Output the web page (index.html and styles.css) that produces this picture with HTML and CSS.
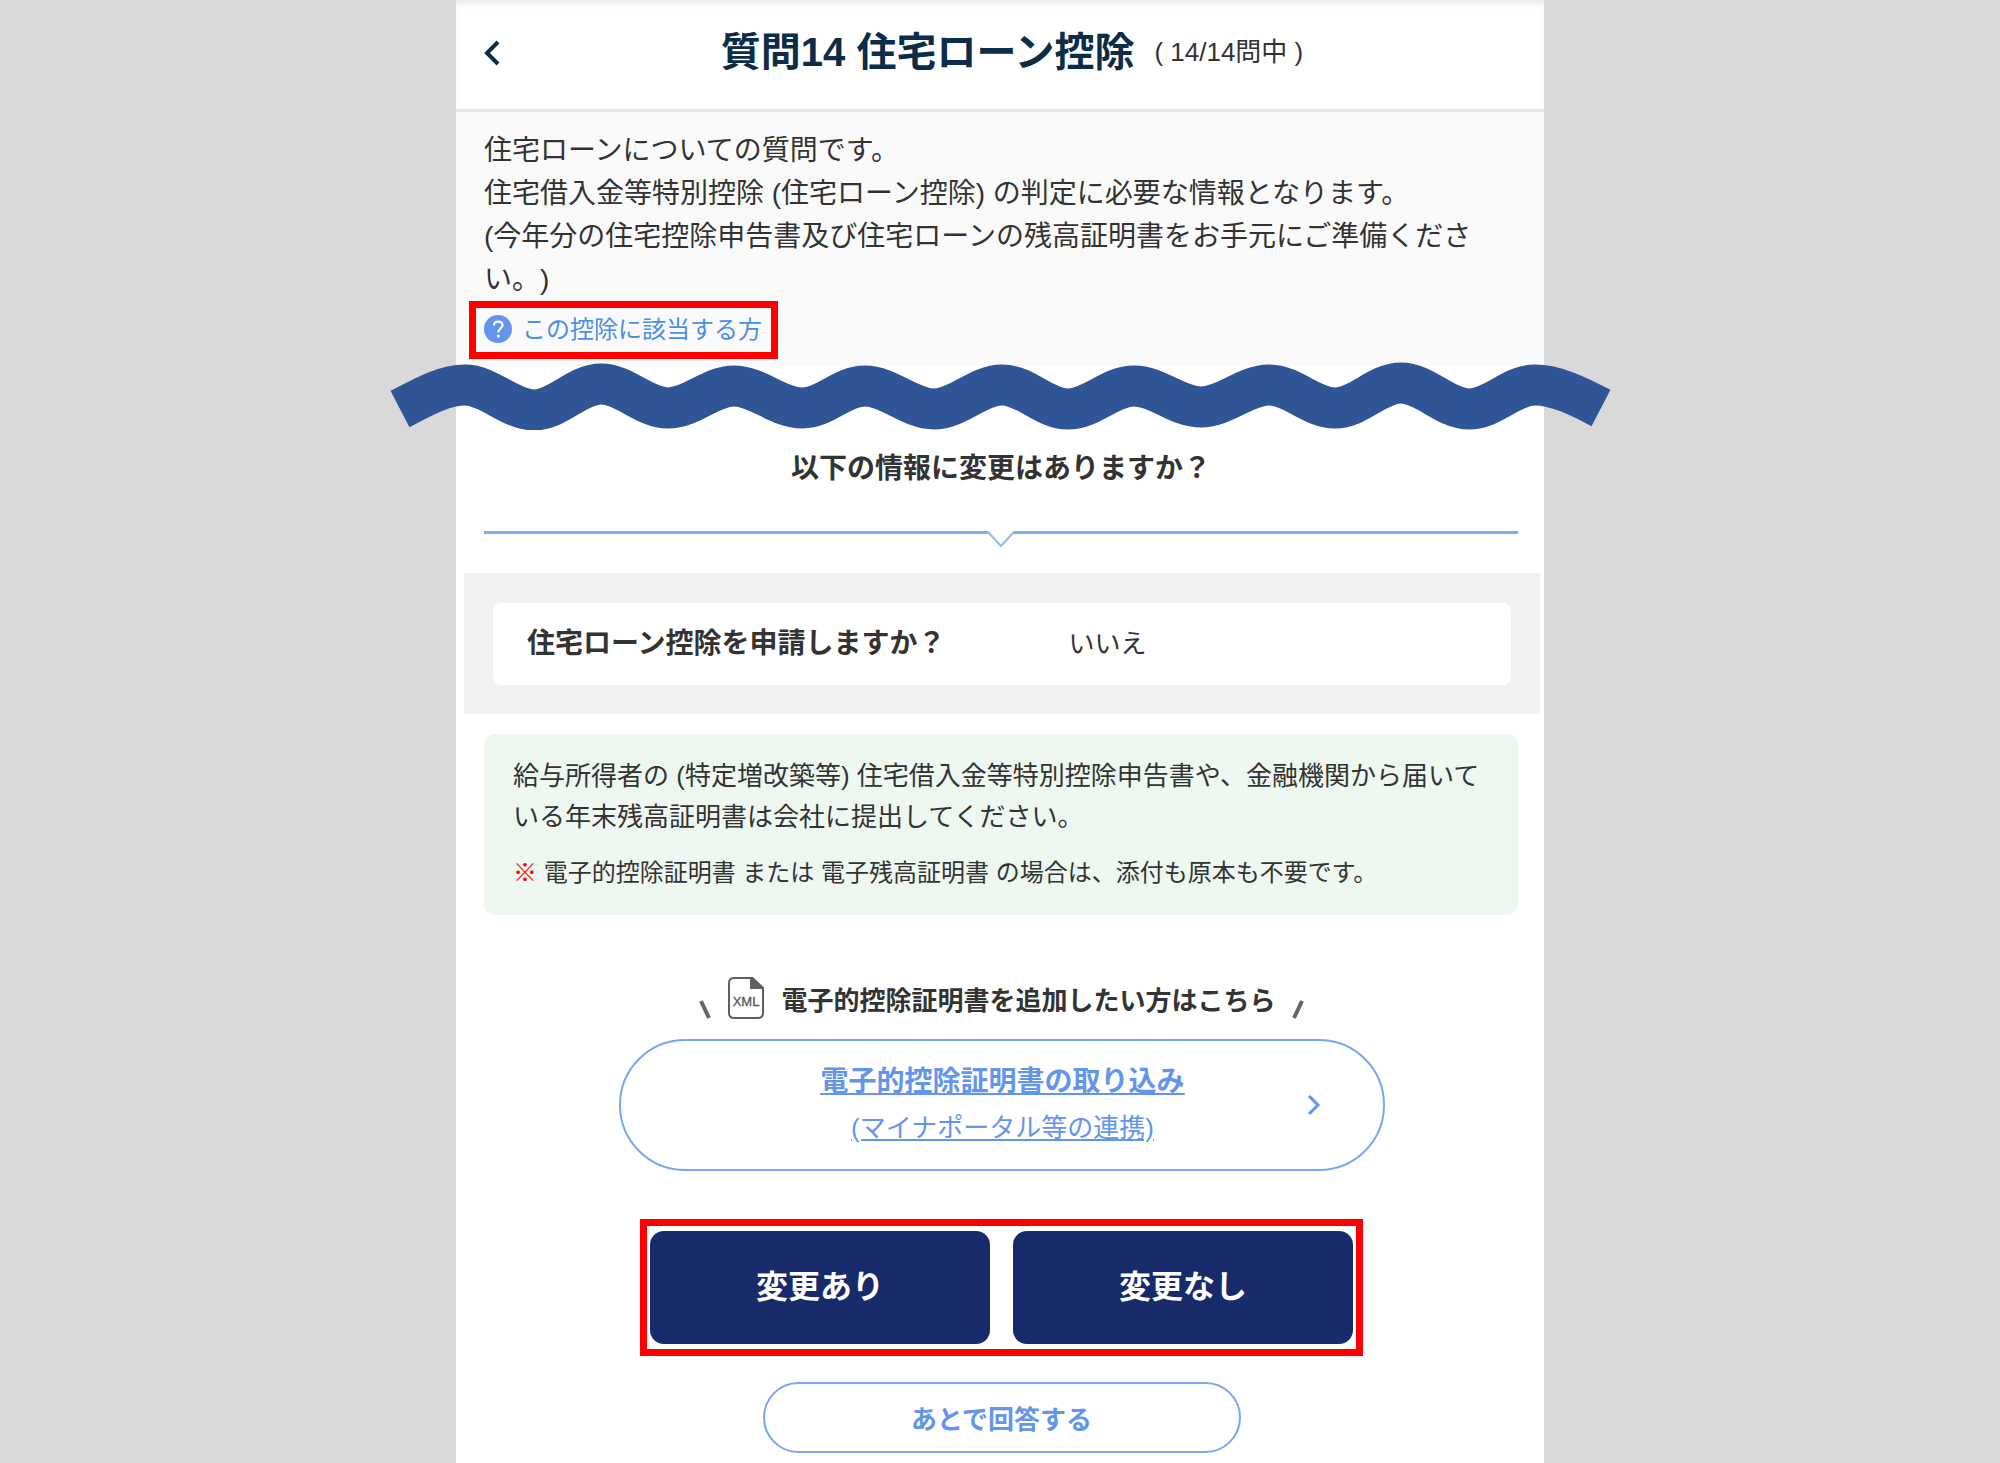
FILE: index.html
```html
<!DOCTYPE html>
<html lang="ja">
<head>
	<meta charset="UTF-8">
	<meta name="viewport" content="width=device-width, initial-scale=1.0">
	<title>質問14 住宅ローン控除</title>
	<link rel="stylesheet" href="styles.css">
</head>
<body>
	<div class="page">
		<header class="header">
			<button class="back" type="button" aria-label="戻る">
				<svg width="16" height="26" viewBox="0 0 16 26"><path d="M14 2L3 13l11 11" fill="none" stroke="#0b2d48" stroke-width="4"/></svg>
			</button>
			<div class="title">
				<h1>質問14 住宅ローン控除</h1>
				<span class="count">( 14/14問中 )</span>
			</div>
		</header>

		<section class="intro">
			<p>住宅ローンについての質問です。<br>住宅借入金等特別控除 (住宅ローン控除) の判定に必要な情報となります。<br>(今年分の住宅控除申告書及び住宅ローンの残高証明書をお手元にご準備ください。)</p>
			<div class="frame help">
				<a href="#">
					<svg width="28" height="28" viewBox="0 0 28 28">
						<circle cx="14" cy="14" r="14" fill="#6495ed"/>
						<path d="M10 10.500c0-5 8.600-5 8.600-.5 0 3.400-4.300 3.600-4.300 7.400" fill="none" stroke="#fff" stroke-width="2.200"/>
						<circle cx="14.300" cy="21" r="1.500" fill="#fff"/>
					</svg>
					<span>この控除に該当する方</span>
				</a>
			</div>
		</section>

		<svg class="wave" viewBox="0 0 1220 68">
			<path d="M10 47C33 35 54 23 75 23C99 23 120 48 144 48S187 22 211 22S254 46 278 46S320 24 344 24S388 46 412 46S451 24 475 24S520 47 544 47S588 23 612 23S654 47 678 47S720 24 744 24S787 45 811 45S855 23 879 23S921 46 945 46S987 21 1011 21S1055 47 1079 47S1121 23 1145 23C1166 23 1188 34 1211 46" fill="none" stroke="#2f5597" stroke-width="41"/>
		</svg>

		<main>
			<h2 class="question">以下の情報に変更はありますか？</h2>
			<div class="divider">
				<svg width="30" height="18" viewBox="0 0 30 18"><path d="M2 0h26L15 15z" fill="#fff"/><path d="M2 1l13 14L28 1" fill="none" stroke="#8fbcf0" stroke-width="2"/></svg>
			</div>

			<div class="answers">
				<dl class="answer">
					<dt>住宅ローン控除を申請しますか？</dt>
					<dd>いいえ</dd>
				</dl>
			</div>

			<div class="notice">
				<p>給与所得者の (特定増改築等) 住宅借入金等特別控除申告書や、金融機関から届いている年末残高証明書は会社に提出してください。</p>
				<p class="notice-sub"><span class="mark">※</span> 電子的控除証明書 または 電子残高証明書 の場合は、添付も原本も不要です。</p>
			</div>

			<div class="actions">
				<div class="xml-header">
					<svg width="12" height="20" viewBox="0 0 12 20"><path d="M2 1l8 17" stroke="#666" stroke-width="4"/></svg>
					<svg width="38" height="44" viewBox="0 0 38 44">
						<path d="M7 2h18L36 12v25q0 5-5 5H7q-5 0-5-5V7q0-5 5-5z" fill="#fff" stroke="#5f5f5f" stroke-width="2"/>
						<path d="M23 1h3l11 11v1H23z" fill="#5f5f5f"/>
						<text x="19" y="30" class="xml-text" text-anchor="middle">XML</text>
					</svg>
					<h3>電子的控除証明書を追加したい方はこちら</h3>
					<svg width="12" height="20" viewBox="0 0 12 20"><path d="M10 1L2 18" stroke="#666" stroke-width="4"/></svg>
				</div>

				<a class="import" href="#">
					<span class="import-text"><b>電子的控除証明書の取り込み</b><span>(マイナポータル等の連携)</span></span>
					<svg width="14" height="22" viewBox="0 0 14 22"><path d="M2 2l9 9-9 9" fill="none" stroke="#6495ed" stroke-width="3"/></svg>
				</a>

				<div class="frame buttons">
					<button type="button">変更あり</button>
					<button type="button">変更なし</button>
				</div>

				<button class="later" type="button">あとで回答する</button>
			</div>
		</main>
	</div>
</body>
</html>
```
FILE: styles.css
```css
* {
	box-sizing: border-box;
}

body {
	margin: 0;
	background-color: #d9d9d9;
	font-family: "Liberation Sans", "Noto Sans CJK JP", sans-serif;
	color: #333;
	overflow-x: hidden;
	text-spacing-trim: space-all;
}

h1, h2, h3, p, dl, dd {
	margin: 0;
}

svg {
	display: block;
	flex-shrink: 0;
}

button {
	font-family: inherit;
	cursor: pointer;
}

.page {
	max-width: 1088px;
	min-height: 100vh;
	margin: 0 auto;
	padding-bottom: 9px;
	background-color: #fff;
}

.header {
	display: flex;
	align-items: center;
	padding: 21px 28px 25px;
	border-bottom: 3px solid #e6e6e6;
	box-shadow: inset 0 6px 6px -3px #e6e6e6;
}

.back {
	width: 24px;
	padding: 0;
	border: none;
	background: none;
}

.title {
	flex: 1;
	display: flex;
	justify-content: center;
	align-items: center;
	gap: 20px;
	line-height: 63px;
}

.title h1 {
	font-size: 40px;
	color: #0b2d48;
}

.count {
	font-size: 26px;
}

.intro {
	padding: 17px 26px 7px 28px;
	background-color: #fafafa;
	font-size: 28px;
	line-height: 43px;
}

.frame {
	width: fit-content;
	border: 7px solid #f00;
}

.help {
	margin-left: -15px;
	padding: 0 9px 0 8px;
}

.help a {
	display: flex;
	align-items: center;
	gap: 10px;
	height: 44px;
	padding-bottom: 2px;
	font-size: 24px;
	color: #4a90e2;
	text-decoration: none;
}

/* torn-page band, sticks out of the page on both sides */
.wave {
	position: relative;
	width: calc(100% + 132px);
	margin: -4px -66px 0;
}

.question {
	margin: 18px 26px 0 28px;
	font-size: 28px;
	line-height: 42px;
	text-align: center;
}

.divider {
	display: flex;
	justify-content: center;
	height: 42px;
	margin: 41px 26px 0 28px;
	border-top: 3px solid #7fb0ef;
}

.divider svg {
	margin-top: -3px;
}

.answers {
	margin: 0 4px 0 8px;
	padding: 30px 29px 29px;
	background-color: #f2f2f2;
}

.answer {
	display: flex;
	align-items: center;
	padding: 20px 34px;
	border-radius: 8px;
	background-color: #fff;
	line-height: 42px;
}

.answer dt {
	width: 57%;
	font-size: 28px;
	font-weight: bold;
}

.answer dd {
	font-size: 26px;
}

.notice {
	margin: 20px 26px 0 28px;
	padding: 22px 29px;
	border-radius: 10px;
	background-color: #eef7f0;
	font-size: 26px;
	line-height: 41px;
}

.notice-sub {
	margin-top: 14px;
	font-size: 24px;
}

.mark {
	color: #f00;
}

.actions {
	padding: 61px 25px 0 28px;
}

.xml-header {
	display: flex;
	justify-content: center;
	align-items: flex-end;
	gap: 16px;
}

.xml-header h3 {
	font-size: 26px;
	line-height: 38px;
}

.xml-text {
	font-size: 13px;
	fill: #555;
	stroke: #555;
	stroke-width: 0.3;
}

.import {
	display: flex;
	align-items: center;
	max-width: 766px;
	margin: 19px auto 0;
	padding: 18px 62px 18px 64px;
	border: 2px solid #7ba6f3;
	border-radius: 66px;
	color: #6495ed;
}

.import-text {
	flex: 1;
	display: flex;
	flex-direction: column;
	padding-left: 14px;
	text-align: center;
	font-size: 26px;
	line-height: 46px;
}

.import-text b {
	font-size: 28px;
}

.import b, .import span span {
	text-decoration: underline;
}

.buttons {
	display: flex;
	gap: 23px;
	margin: 48px auto 0;
	padding: 5px 3px;
}

.buttons button {
	width: 340px;
	height: 113px;
	padding-bottom: 8px;
	border: none;
	border-radius: 14px;
	background-color: #172b6a;
	color: #fff;
	font-size: 32px;
	font-weight: bold;
}

.later {
	display: block;
	width: 478px;
	height: 71px;
	margin: 26px auto 0;
	border: 2px solid #7ba6f3;
	border-radius: 36px;
	background-color: #fff;
	color: #6495ed;
	font-size: 26px;
	font-weight: bold;
}
```
